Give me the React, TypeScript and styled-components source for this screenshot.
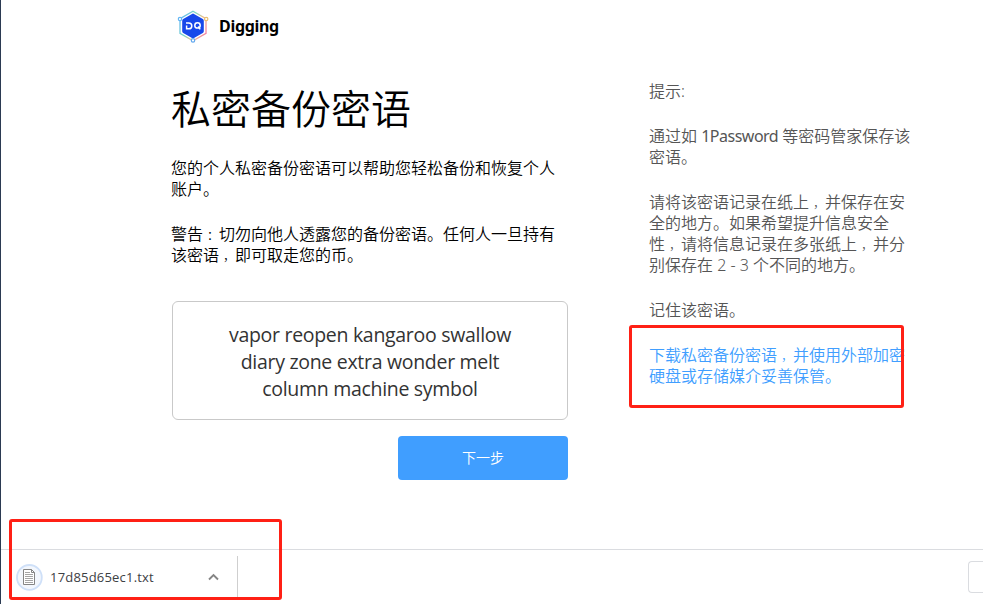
import React from "react";
import styled, { createGlobalStyle } from "styled-components";

const GlobalStyle = createGlobalStyle`
  *, *::before, *::after { box-sizing: border-box; }
  html, body { margin: 0; padding: 0; background: #fff; overflow: hidden; }
  body { font-family: "Noto Sans", "Noto Sans CJK SC", sans-serif; color: #000; }
`;

const Page = styled.div`
  position: relative;
  display: flex;
  flex-direction: column;
  width: 983px;
  height: 604px;
  overflow: hidden;
  background: #fff;
  border-left: 1px solid #2b3a52;
`;

const Header = styled.header`
  display: flex;
  align-items: center;
  gap: 10px;
  height: 52px;
  padding-left: 176px;
  flex: none;
`;

const Brand = styled.span`
  font-size: 16px;
  font-weight: 700;
  line-height: 22px;
  letter-spacing: -0.3px;
`;

const Content = styled.main`
  display: flex;
  flex: 1;
  padding-left: 170px;
`;

const Main = styled.section`
  width: 397px;
  padding-top: 28px;
  display: flex;
  flex-direction: column;
`;

const Title = styled.h1`
  margin: 0 0 24px;
  font-family: "Noto Sans CJK SC", sans-serif;
  font-size: 40px;
  font-weight: 350;
  line-height: 54px;
`;

const Paragraph = styled.p`
  margin: 0 0 24px;
  font-size: 16px;
  font-weight: 350;
  line-height: 21px;
  white-space: nowrap;
`;

const Mark = styled.span`
  display: inline-block;
  width: 16px;
  height: 21px;
  padding-left: 4px;
  vertical-align: top;
  font-size: 12px;
  line-height: 23px;
`;

const Latin = styled.span`
  font-weight: 400;
  letter-spacing: -0.5px;
`;

const Phrase = styled.div`
  display: flex;
  flex-direction: column;
  justify-content: center;
  align-items: center;
  width: 396px;
  height: 119px;
  margin: 11px 0 0 1px;
  padding-top: 2px;
  border: 1px solid #c9c9c9;
  border-radius: 6px;
  font-family: "Open Sans", sans-serif;
  font-size: 19.5px;
  line-height: 27px;
  letter-spacing: -0.3px;
  color: #333;
  white-space: nowrap;
`;

const NextButton = styled.button`
  align-self: flex-end;
  width: 170px;
  height: 44px;
  margin-top: 16px;
  padding: 0 0 2px;
  border: 0;
  border-radius: 4px;
  background: #409eff;
  color: #fff;
  font: 350 14px "Noto Sans CJK SC", sans-serif;
`;

const Tips = styled.aside`
  margin-left: 81px;
  padding-top: 29px;
  color: #555;
`;

const DownloadLink = styled(Paragraph)`
  color: #409eff;
`;

const DownloadBar = styled.footer`
  display: flex;
  flex: none;
  height: 55px;
  border-top: 1px solid #dadce0;
`;

const DownloadItem = styled.div`
  display: flex;
  align-items: center;
  width: 237px;
  height: 42px;
  margin-top: 6px;
  padding: 0 18px 0 14px;
  border-right: 1px solid #cfcfcf;
`;

const FileName = styled.span`
  flex: 1;
  margin-left: 7px;
  font-family: "Open Sans", sans-serif;
  font-size: 13px;
  line-height: 20px;
  letter-spacing: 0.2px;
  color: #3c4043;
`;

const ShowAll = styled.div`
  width: 15px;
  height: 32px;
  margin: 11px 0 0 auto;
  border: 1px solid #dadce0;
  border-right: 0;
  border-radius: 4px 0 0 4px;
`;

const Highlight = styled.div<{ $x: number; $y: number; $w: number; $h: number }>`
  position: absolute;
  left: ${(p) => p.$x}px;
  top: ${(p) => p.$y}px;
  width: ${(p) => p.$w}px;
  height: ${(p) => p.$h}px;
  border: 3px solid #ff2015;
  border-radius: 3px;
  pointer-events: none;
`;

const EdgeMark = styled.i<{ $y: number; $h: number; $c: string }>`
  position: absolute;
  left: -1px;
  top: ${(p) => p.$y}px;
  width: 1px;
  height: ${(p) => p.$h}px;
  background: ${(p) => p.$c};
`;

const Logo = () => (
  <svg width="32" height="34" viewBox="0 0 32 34" fill="none">
    <defs>
      <linearGradient id="ring" x1="2" y1="10" x2="30" y2="24" gradientUnits="userSpaceOnUse">
        <stop offset="0" stopColor="#62b5f4" />
        <stop offset=".38" stopColor="#79d8c2" />
        <stop offset=".65" stopColor="#ecc08d" />
        <stop offset="1" stopColor="#f27fa4" />
      </linearGradient>
    </defs>
    <path d="M16 2.2 29 9.6v14.800l-13 7.400-13-7.400V9.600Z" stroke="url(#ring)" strokeWidth="1.3" />
    <path d="M15 4.9q1-.6 2 0l8.800 5.100q1 .6 1 1.700v10.600q0 1.100-1 1.700L17 29.100q-1 .6-2 0L6.200 24q-1-.6-1-1.700V11.700q0-1.100 1-1.700Z" fill="#1748ea" />
    <circle cx="3" cy="10" r="1.7" fill="#fff" stroke="#62b5f4" strokeWidth="1.2" />
    <circle cx="29.2" cy="10" r="1.7" fill="#fff" stroke="#e9be72" strokeWidth="1.2" />
    <circle cx="16" cy="31.4" r="1.7" fill="#fff" stroke="#62a9ef" strokeWidth="1.2" />
    <path d="M9 14h2.700q3.100 0 3.100 2.900t-3.100 2.900H9.600v-3.200" stroke="#fff" strokeWidth="1.5" />
    <circle cx="20.500" cy="16.400" r="2.700" stroke="#fff" strokeWidth="1.5" />
    <path d="m21.200 17.500 2 2.900" stroke="#fff" strokeWidth="1.5" />
  </svg>
);

const FileIcon = () => (
  <svg width="28" height="28" viewBox="0 0 28 28" fill="none">
    <circle cx="14.4" cy="14.4" r="12.4" fill="#f3f7fd" stroke="#cfe0f8" strokeWidth="1.8" />
    <path d="M8.5 6.5h8l3 3v12h-11Z" fill="#fff" stroke="#858585" />
    <path d="M16.5 6.5v3h3" stroke="#858585" />
    <path d="M10 9.5h5M10 11.5h8M10 13.5h8M10 15.5h8M10 17.5h8M10 19.5h8" stroke="#a5a5a5" />
  </svg>
);

const Chevron = () => (
  <svg width="11" height="8" viewBox="0 0 11 8" fill="none">
    <path d="m1 6.5 4.5-4.5L10 6.5" stroke="#858585" strokeWidth="1.9" />
  </svg>
);

export default function App() {
  return (
    <>
      <GlobalStyle />
      <Page>
        <Header>
          <Logo />
          <Brand>Digging</Brand>
        </Header>
        <Content>
          <Main>
            <Title>私密备份密语</Title>
            <Paragraph>
              您的个人私密备份密语可以帮助您轻松备份和恢复个人
              <br />
              账户。
            </Paragraph>
            <Paragraph>
              警告<Mark>：</Mark>切勿向他人透露您的备份密语。任何人一旦持有
              <br />
              该密语<Mark>，</Mark>即可取走您的币。
            </Paragraph>
            <Phrase>
              <span>vapor reopen kangaroo swallow</span>
              <span>diary zone extra wonder melt</span>
              <span>column machine symbol</span>
            </Phrase>
            <NextButton>下一步</NextButton>
          </Main>
          <Tips>
            <Paragraph>提示:</Paragraph>
            <Paragraph>
              通过如 <Latin>1Password</Latin> 等密码管家保存该
              <br />
              密语。
            </Paragraph>
            <Paragraph>
              请将该密语记录在纸上<Mark>，</Mark>并保存在安
              <br />
              全的地方。如果希望提升信息安全
              <br />
              性<Mark>，</Mark>请将信息记录在多张纸上<Mark>，</Mark>并分
              <br />
              别保存在 2 - 3 个不同的地方。
            </Paragraph>
            <Paragraph>记住该密语。</Paragraph>
            <DownloadLink>
              下载私密备份密语<Mark>，</Mark>并使用外部加密
              <br />
              硬盘或存储媒介妥善保管。
            </DownloadLink>
          </Tips>
        </Content>
        <DownloadBar>
          <DownloadItem>
            <FileIcon />
            <FileName>17d85d65ec1.txt</FileName>
            <Chevron />
          </DownloadItem>
          <ShowAll />
        </DownloadBar>
        <EdgeMark $y={197} $h={2} $c="#a8612c" />
        <EdgeMark $y={306} $h={1} $c="#c5a0b0" />
        <EdgeMark $y={311} $h={1} $c="#d06a70" />
        <EdgeMark $y={314} $h={1} $c="#c5b0c0" />
        <EdgeMark $y={392} $h={2} $c="#2a66b8" />
        <EdgeMark $y={583} $h={9} $c="#7fb0bd" />
        <Highlight $x={628} $y={325} $w={275} $h={83} />
        <Highlight $x={8} $y={519} $w={273} $h={81} />
      </Page>
    </>
  );
}
